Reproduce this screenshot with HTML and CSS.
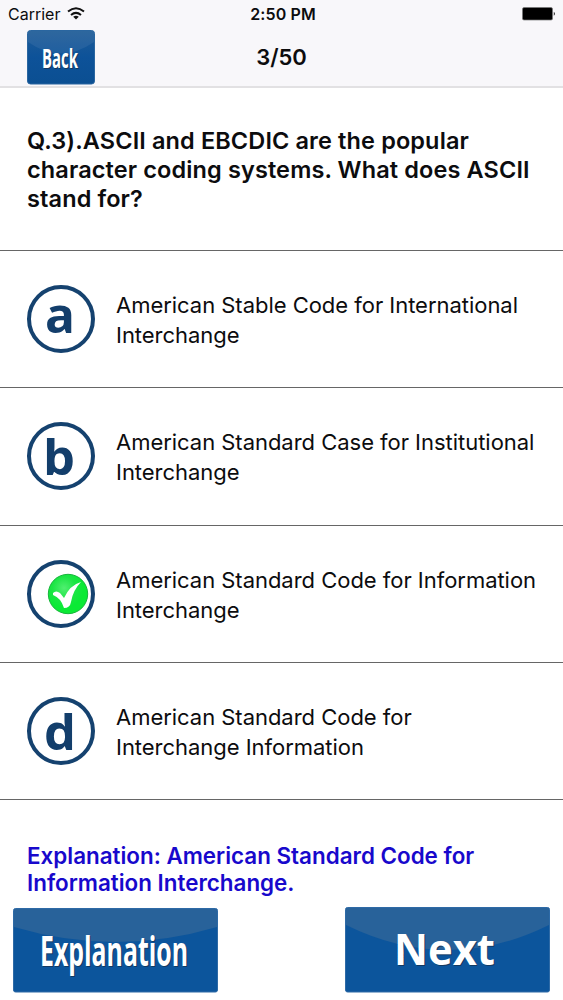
FILE: index.html
```
<!DOCTYPE html>
<html lang="en">
<head>
<meta charset="utf-8">
<title>Quiz 3/50</title>
<link rel="stylesheet" href="styles.css">
</head>
<body>
<header class="header">
  <div class="status">
    <div class="carrier"><span>Carrier</span>
      <svg class="wifi" width="18" height="13" viewBox="0 0 18 13"><g fill="none" stroke="#111" stroke-width="2"><path d="M1 4.6Q9-2 17 4.6"/><path d="M4 8Q9 3.8 14 8"/></g><path d="M6.2 9.7Q9 7.6 11.8 9.7L9 12.6Z" fill="#111"/></svg>
    </div>
    <div class="time">2:50 PM</div>
    <svg class="battery" width="34" height="14" viewBox="0 0 34 14"><rect x=".5" y=".5" width="30" height="12.5" rx="1.5" fill="#000" stroke="#777" stroke-width=".7"/><path d="M31.8 4.8Q34 6.7 31.8 8.8Z" fill="#111"/></svg>
  </div>
  <div class="nav">
    <svg class="back" width="68" height="55" viewBox="0 0 68 55">
      <defs><linearGradient id="face" x2="0" y2="1"><stop stop-color="#1f5c97"/><stop offset=".5" stop-color="#0d5299"/><stop offset="1" stop-color="#0b4f92"/></linearGradient></defs>
      <rect x=".5" y=".5" width="67" height="53.5" rx="3" fill="url(#face)" stroke="#2a66a0"/>
      <path d="M1 3Q1 1 3 1H65Q67 1 67 3V12Q34 35 1 12Z" fill="#fff" opacity=".07"/>
      <g class="label back-label"><text class="shade" x="16" y="38.5" textLength="36" lengthAdjust="spacingAndGlyphs">Back</text><text x="15" y="37.5" textLength="36" lengthAdjust="spacingAndGlyphs">Back</text></g>
    </svg>
    <div class="counter">3/50</div>
  </div>
</header>
<main>
  <section class="question"><p>Q.3).ASCII and EBCDIC are the popular<br>character coding systems. What does ASCII<br>stand for?</p></section>
  <section class="option">
    <svg class="badge" width="70" height="70" viewBox="0 0 70 70"><circle cx="35" cy="35" r="32" /><text x="19" y="49" textLength="30" lengthAdjust="spacingAndGlyphs">a</text></svg>
    <p>American Stable Code for International<br>Interchange</p>
  </section>
  <section class="option">
    <svg class="badge" width="70" height="70" viewBox="0 0 70 70"><circle cx="35" cy="35" r="32" /><text x="17" y="54" textLength="32" lengthAdjust="spacingAndGlyphs">b</text></svg>
    <p>American Standard Case for Institutional<br>Interchange</p>
  </section>
  <section class="option">
    <svg class="badge" width="70" height="70" viewBox="0 0 70 70"><defs><radialGradient id="green" cx=".4" cy=".35"><stop stop-color="#50ef70"/><stop offset=".6" stop-color="#1be544"/><stop offset="1" stop-color="#0bea35"/></radialGradient></defs><circle cx="35" cy="35" r="32"/><circle class="disc" cx="42" cy="35" r="19.7" fill="url(#green)"/><path d="M27 34Q30 31 34 34L38 39Q44 26 55 23Q47 31 45 43Q44 49 38 49Q35 39 27 36Z" fill="#fff"/></svg>
    <p>American Standard Code for Information<br>Interchange</p>
  </section>
  <section class="option">
    <svg class="badge" width="70" height="70" viewBox="0 0 70 70"><circle cx="35" cy="35" r="32" /><text x="18" y="54" textLength="32" lengthAdjust="spacingAndGlyphs">d</text></svg>
    <p>American Standard Code for<br>Interchange Information</p>
  </section>
  <section class="explanation"><p>Explanation: American Standard Code for<br>Information Interchange.</p></section>
</main>
<footer class="actions">
  <svg width="205" height="86" viewBox="0 0 205 86">
    <rect x=".5" y="1.5" width="204" height="83.5" rx="2" fill="#0c559c" stroke="#2e6aa6"/>
    <path d="M1 2H204V20Q103 50 1 20Z" fill="#28629a"/>
    <g class="label wide-label"><text class="shade" x="28" y="60" textLength="148" lengthAdjust="spacingAndGlyphs">Explanation</text><text x="27" y="59" textLength="148" lengthAdjust="spacingAndGlyphs">Explanation</text></g>
  </svg>
  <svg width="205" height="86" viewBox="0 0 205 86">
    <rect x=".5" y=".5" width="204" height="84.5" rx="2" fill="#0c559c" stroke="#2e6aa6"/>
    <path d="M1 1H204V18Q103 68 1 18Z" fill="#28629a"/>
    <g class="label next-label"><text class="shade" x="50" y="59" textLength="101" lengthAdjust="spacingAndGlyphs">Next</text><text x="49" y="58" textLength="101" lengthAdjust="spacingAndGlyphs">Next</text></g>
  </svg>
</footer>
</body>
</html>
```
FILE: styles.css
```
* { box-sizing: border-box; }
body { margin: 0; width: 563px; height: 1000px; overflow: hidden; background: #fff; color: #0c0c0e; font-family: Inter, "Liberation Sans", sans-serif; }
p { margin: 0; white-space: nowrap; }
svg { display: block; flex: none; overflow: visible; }
.header { height: 88px; background: #f8f7fa; border-bottom: 2px solid #e2e1e3; }
.status { height: 29px; display: grid; grid-template-columns: 1fr auto 1fr; align-items: center; padding: 0 7px 1px 8px; font-size: 16px; }
.carrier { display: flex; align-items: center; gap: 7px; }
.carrier svg { margin-bottom: 2px; }
.time { font-weight: 600; letter-spacing: .1px; padding-left: 2px; }
.battery { justify-self: end; }
.nav { display: grid; grid-template-columns: 1fr auto 1fr; align-items: center; padding: 0 27px; }
.back { margin-top: 1px; }
.counter { font-size: 22px; font-weight: 600; }
.label { font-family: "Open Sans", sans-serif; font-weight: 700; fill: #fff; }
.shade { fill: #17304e; opacity: .75; }
.back-label { font-size: 27px; }
.wide-label { font-size: 42px; }
.next-label { font-size: 42.5px; }
.question { height: 163px; padding: 38px 27px 0; border-bottom: 1px solid #666; font-size: 23.5px; letter-spacing: .12px; line-height: 29px; font-weight: 600; }
.option { height: 137.25px; border-bottom: 1px solid #666; display: flex; align-items: center; gap: 20px; padding-left: 26px; }
.option p { font-size: 22px; letter-spacing: -.03px; line-height: 30px; padding-top: 2px; }
.badge { fill: none; }
.badge circle { stroke: #15426f; stroke-width: 4; }
.badge .disc { stroke: #18b53c; stroke-width: 1; }
.badge text { fill: #133e6b; font: 700 49px "Open Sans", sans-serif; }
.explanation { height: 107px; padding: 42px 27px 0; color: #1808cc; font-size: 22.4px; line-height: 27px; font-weight: 600; }
.actions { display: flex; justify-content: space-between; padding: 0 13px; }
```
